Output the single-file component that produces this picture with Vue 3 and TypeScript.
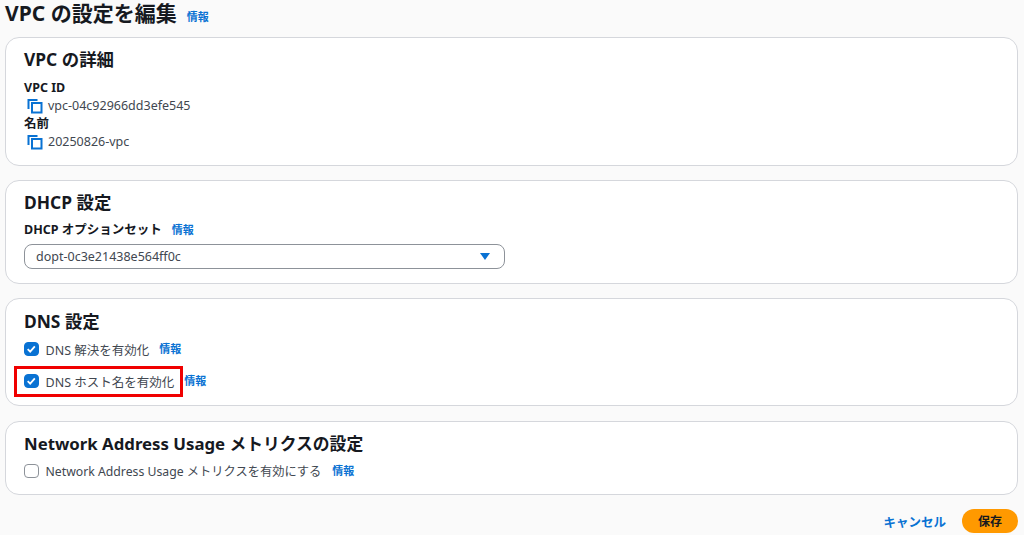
<script setup lang="ts">
const infoLabel = '情報'
</script>

<template>
  <div class="page">
    <header class="title-row">
      <h1>VPC の設定を編集</h1>
      <a class="info top-info">{{ infoLabel }}</a>
    </header>

    <section class="card c1">
      <h2>VPC の詳細</h2>
      <div class="label l1">VPC ID</div>
      <div class="copy-row">
        <svg class="copy" width="16" height="16" viewBox="0 0 16 16" fill="none" stroke="#0972d3" stroke-width="2">
          <path d="M1.5 11V2h9" />
          <rect x="5" y="5" width="9.5" height="9.5" />
        </svg>
        <span>vpc-04c92966dd3efe545</span>
      </div>
      <div class="label">名前</div>
      <div class="copy-row">
        <svg class="copy" width="16" height="16" viewBox="0 0 16 16" fill="none" stroke="#0972d3" stroke-width="2">
          <path d="M1.5 11V2h9" />
          <rect x="5" y="5" width="9.5" height="9.5" />
        </svg>
        <span>20250826-vpc</span>
      </div>
    </section>

    <section class="card c2">
      <h2>DHCP 設定</h2>
      <div class="label l2">DHCP オプションセット<a class="info gap10">{{ infoLabel }}</a></div>
      <div class="select">
        <span>dopt-0c3e21438e564ff0c</span>
        <i class="caret"></i>
      </div>
    </section>

    <section class="card c3">
      <h2>DNS 設定</h2>
      <div class="check-row r1">
        <span class="box on"><svg width="14" height="14" viewBox="0 0 14 14" fill="none" stroke="#fff" stroke-width="2"><path d="M3 7.2l2.8 2.8L11 4" /></svg></span>
        <span class="check-text">DNS 解決を有効化</span>
        <a class="info gap10">{{ infoLabel }}</a>
      </div>
      <div class="check-row r2">
        <span class="box on"><svg width="14" height="14" viewBox="0 0 14 14" fill="none" stroke="#fff" stroke-width="2"><path d="M3 7.2l2.8 2.8L11 4" /></svg></span>
        <span class="check-text">DNS ホスト名を有効化</span>
        <a class="info gap10">{{ infoLabel }}</a>
        <span class="highlight"></span>
      </div>
    </section>

    <section class="card c4">
      <h2 class="h-net">Network Address Usage メトリクスの設定</h2>
      <div class="check-row r3">
        <span class="box"></span>
        <span class="check-text net">Network Address Usage メトリクスを有効にする</span>
        <a class="info gap11">{{ infoLabel }}</a>
      </div>
    </section>

    <footer class="actions">
      <a class="cancel">キャンセル</a>
      <button class="save">保存</button>
    </footer>
  </div>
</template>

<style>
html, body { margin: 0; background: #fafafa; }
</style>

<style scoped>
.page {
  width: 1024px;
  height: 535px;
  box-sizing: border-box;
  padding: 0 6px 0 5px;
  overflow: hidden;
  background: #fafafa;
  color: #16191f;
  font-family: "Noto Sans", "Noto Sans CJK JP", sans-serif;
}
.title-row { display: flex; align-items: center; height: 26px; margin-bottom: 11px; }
h1 { margin: 0; font-size: 21px; line-height: 26px; font-weight: 700; }
.top-info { margin-left: 10px; margin-top: 7px; }
.info { color: #0972d3; font-size: 11px; font-weight: 700; line-height: 14px; }
.card {
  box-sizing: border-box;
  background: #fff;
  border: 1px solid #d5d7dc;
  border-radius: 14px;
  padding: 10px 18px 0;
  margin-bottom: 15px;
}
.c1 { height: 129px; margin-bottom: 14px; }
.c2 { height: 104px; margin-bottom: 14px; }
.c3 { height: 108px; padding-top: 11px; }
.c4 { height: 74px; padding-top: 11px; }
h2 { margin: 0; font-size: 17.4px; line-height: 22px; font-weight: 700; }
h2.h-net { font-size: 16.8px; }
.label { font-size: 12.5px; line-height: 16px; font-weight: 700; margin-top: 1px; }
.l1 { margin-top: 10px; }
.l2 { margin-top: 9px; display: flex; align-items: center; }
.copy-row { display: flex; align-items: center; height: 19px; padding-left: 3px; font-size: 12.5px; color: #414750; }
.copy { margin-right: 5px; }
.gap11 { margin-left: 11px; }
.gap10 { margin-left: 10px; }
.select {
  box-sizing: border-box;
  width: 481px;
  height: 25px;
  margin-top: 6px;
  padding: 0 14px 0 11px;
  display: flex;
  align-items: center;
  justify-content: space-between;
  border: 1.5px solid #8d9299;
  border-radius: 8px;
  font-size: 12.5px;
  color: #414750;
}
.caret {
  width: 0;
  height: 0;
  border-left: 5px solid transparent;
  border-right: 5px solid transparent;
  border-top: 7px solid #0972d3;
}
.check-row { position: relative; display: flex; align-items: center; height: 20px; }
.r1 { margin-top: 7px; }
.r2 { margin-top: 12px; }
.r3 { margin-top: 6px; }
.box {
  box-sizing: border-box;
  width: 14.5px;
  height: 14.5px;
  border-radius: 4px;
  border: 1.5px solid #8d9299;
  background: #fff;
  display: flex;
  align-items: center;
  justify-content: center;
  margin-right: 7px;
}
.box.on { background: #0972d3; border-color: #0972d3; }
.check-text { font-size: 12.5px; color: #414750; }
.check-text.net { font-size: 12.25px; }
.highlight {
  position: absolute;
  left: -10px;
  top: -5px;
  width: 169px;
  height: 31px;
  box-sizing: border-box;
  border: 3px solid #f00000;
}
.actions { display: flex; justify-content: flex-end; align-items: center; gap: 16px; margin-top: -1px; }
.cancel { color: #0972d3; font-size: 12.5px; font-weight: 700; }
.save {
  width: 56px;
  height: 24px;
  border: 0;
  padding: 0;
  border-radius: 12px;
  background: #ff9900;
  color: #16191f;
  font: 700 12px "Noto Sans", "Noto Sans CJK JP", sans-serif;
}
</style>
